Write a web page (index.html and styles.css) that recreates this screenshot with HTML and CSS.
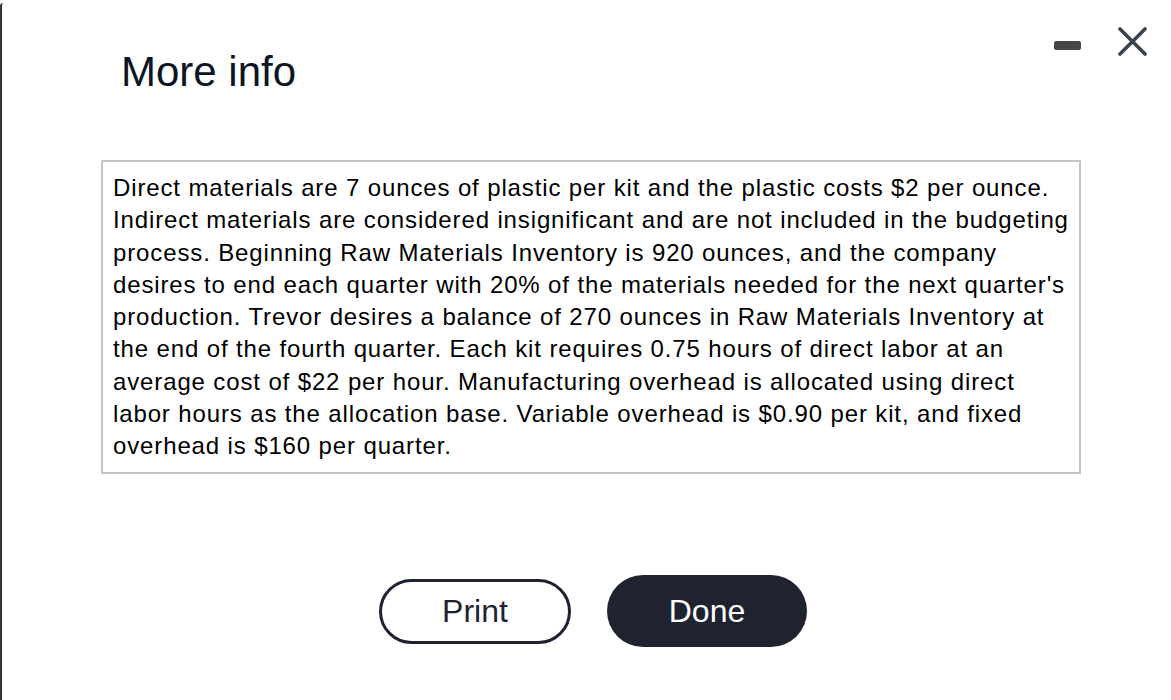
FILE: index.html
```html
<!DOCTYPE html>
<html lang="en">
<head>
<meta charset="utf-8">
<title>More info</title>
<link rel="stylesheet" href="styles.css">
</head>
<body>
<div class="modal">
  <header class="header">
    <h1 class="title">More info</h1>
    <div class="controls">
      <span class="minimize" aria-label="Minimize"></span>
      <svg class="close" width="29" height="29" viewBox="0 0 29 29" aria-label="Close">
        <path d="M2 2 L27 27 M27 2 L2 27" stroke="#3b4350" stroke-width="3.6" stroke-linecap="round" fill="none"/>
      </svg>
    </div>
  </header>
  <div class="info-box">
    <p class="info-text">Direct materials are 7 ounces of plastic per kit and the plastic costs $2 per ounce.<br>
Indirect materials are considered insignificant and are not included in the budgeting<br>
process. Beginning Raw Materials Inventory is 920 ounces, and the company<br>
desires to end each quarter with 20% of the materials needed for the next quarter's<br>
production. Trevor desires a balance of 270 ounces in Raw Materials Inventory at<br>
the end of the fourth quarter. Each kit requires 0.75 hours of direct labor at an<br>
average cost of $22 per hour. Manufacturing overhead is allocated using direct<br>
labor hours as the allocation base. Variable overhead is $0.90 per kit, and fixed<br>
overhead is $160 per quarter.</p>
  </div>
  <div class="actions">
    <button class="btn btn-print">Print</button>
    <button class="btn btn-done">Done</button>
  </div>
</div>
</body>
</html>
```
FILE: styles.css
```css
html, body {
  margin: 0;
  padding: 0;
  background: #fff;
}
body {
  font-family: "Liberation Sans", Arial, Helvetica, sans-serif;
  width: 1171px;
  height: 700px;
  overflow: hidden;
}
.modal {
  box-sizing: border-box;
  height: 700px;
  margin-top: 3px;
  border-left: 2px solid #333;
  border-top-left-radius: 3px;
}
.header {
  display: flex;
  align-items: flex-start;
}
.title {
  margin: 0 0 0 119px;
  padding-top: 45px;
  font-size: 42px;
  line-height: 48px;
  font-weight: normal;
  color: #0b1523;
}
.controls {
  margin-left: auto;
  margin-right: 24px;
  margin-top: 24px;
  display: flex;
  align-items: flex-start;
}
.minimize {
  display: block;
  width: 27px;
  height: 9px;
  border-radius: 2px;
  background: #464646;
  margin-top: 14px;
  margin-right: 37px;
}
.close {
  display: block;
}
.info-box {
  box-sizing: border-box;
  width: 980px;
  margin: 64px 0 0 99px;
  border: 2px solid #c4c4c4;
  padding: 10px 4px 10px 10px;
}
.info-text {
  margin: 0;
  font-size: 24px;
  line-height: 32.25px;
  letter-spacing: 0.87px;
  white-space: nowrap;
  color: #000;
}
.actions {
  display: flex;
  align-items: center;
  margin: 101px 0 0 377px;
  gap: 36px;
}
.btn {
  font-family: "Liberation Sans", Arial, Helvetica, sans-serif;
  font-size: 32px;
  box-sizing: border-box;
  border-radius: 40px;
  cursor: pointer;
  padding: 0;
}
.btn-print {
  width: 192px;
  height: 65px;
  background: #fff;
  border: 3px solid #1f2330;
  color: #1f2330;
}
.btn-done {
  width: 200px;
  height: 72px;
  background: #1f2330;
  border: none;
  color: #fff;
}
```
